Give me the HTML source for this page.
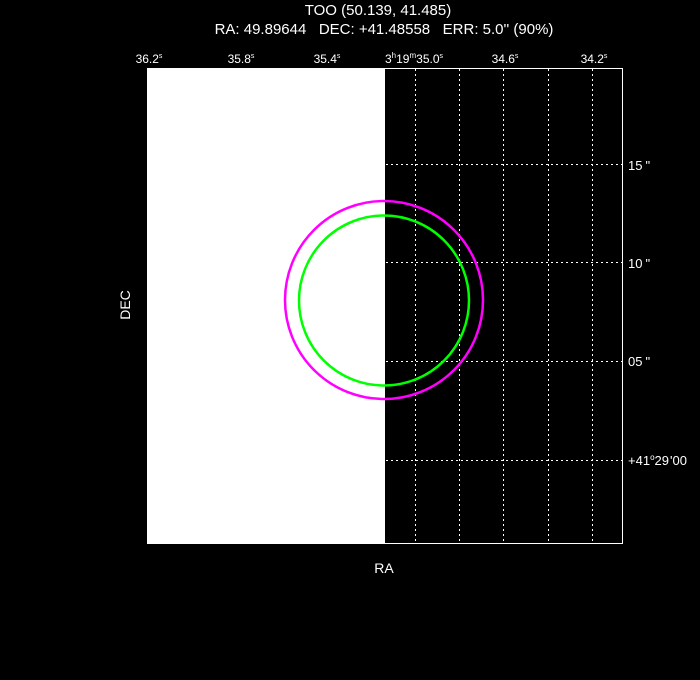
<!DOCTYPE html>
<html><head><style>
html,body{margin:0;padding:0;background:#000;width:700px;height:680px;overflow:hidden}
svg{display:block}
text{font-family:"Liberation Sans",sans-serif;fill:#fff;white-space:pre}
</style></head><body>
<svg width="700" height="680" viewBox="0 0 700 680">
<rect width="700" height="680" fill="#000"/>
<text x="378" y="15" font-size="15" text-anchor="middle">TOO (50.139, 41.485)</text>
<text x="384" y="34" font-size="15" text-anchor="middle">RA: 49.89644   DEC: +41.48558   ERR: 5.0'' (90%)</text>
<g font-size="12">
<text x="149" y="63" text-anchor="middle">36.2<tspan font-size="7" dy="-5">s</tspan></text>
<text x="241" y="63" text-anchor="middle">35.8<tspan font-size="7" dy="-5">s</tspan></text>
<text x="327" y="63" text-anchor="middle">35.4<tspan font-size="7" dy="-5">s</tspan></text>
<text x="414" y="63" text-anchor="middle">3<tspan font-size="8" dy="-5">h</tspan><tspan dy="5">19</tspan><tspan font-size="8" dy="-5">m</tspan><tspan dy="5">35.0</tspan><tspan font-size="7" dy="-5">s</tspan></text>
<text x="505" y="63" text-anchor="middle">34.6<tspan font-size="7" dy="-5">s</tspan></text>
<text x="594" y="63" text-anchor="middle">34.2<tspan font-size="7" dy="-5">s</tspan></text>
</g>
<rect x="147.5" y="68.5" width="475" height="475" fill="#000" stroke="#fff" stroke-width="1"/>
<rect x="147" y="68" width="238" height="476" fill="#fff"/>
<g stroke="#fff" stroke-width="1" stroke-dasharray="2,3">
<line x1="415.5" y1="69" x2="415.5" y2="543"/>
<line x1="459.5" y1="69" x2="459.5" y2="543"/>
<line x1="503.5" y1="69" x2="503.5" y2="543"/>
<line x1="548.5" y1="69" x2="548.5" y2="543"/>
<line x1="592.5" y1="69" x2="592.5" y2="543"/>
<line x1="386" y1="164.5" x2="622" y2="164.5"/>
<line x1="386" y1="262.5" x2="622" y2="262.5"/>
<line x1="386" y1="361.5" x2="622" y2="361.5"/>
<line x1="386" y1="460.5" x2="622" y2="460.5"/>
</g>
<circle cx="384" cy="300" r="99" fill="none" stroke="#ff00ff" stroke-width="2.5"/>
<circle cx="384" cy="300.5" r="85" fill="none" stroke="#00ff00" stroke-width="2.5"/>
<g font-size="13">
<text x="628" y="170">15<tspan dx="3">"</tspan></text>
<text x="628" y="268">10<tspan dx="3">"</tspan></text>
<text x="628" y="366">05<tspan dx="3">"</tspan></text>
<text x="628" y="465">+41<tspan font-size="8" dy="-5">o</tspan><tspan dy="5">29</tspan><tspan dx="1">'</tspan>00</text>
</g>
<text x="130" y="305" font-size="14" text-anchor="middle" transform="rotate(-90 130 305)">DEC</text>
<text x="384" y="573" font-size="14" text-anchor="middle">RA</text>
</svg>
</body></html>
